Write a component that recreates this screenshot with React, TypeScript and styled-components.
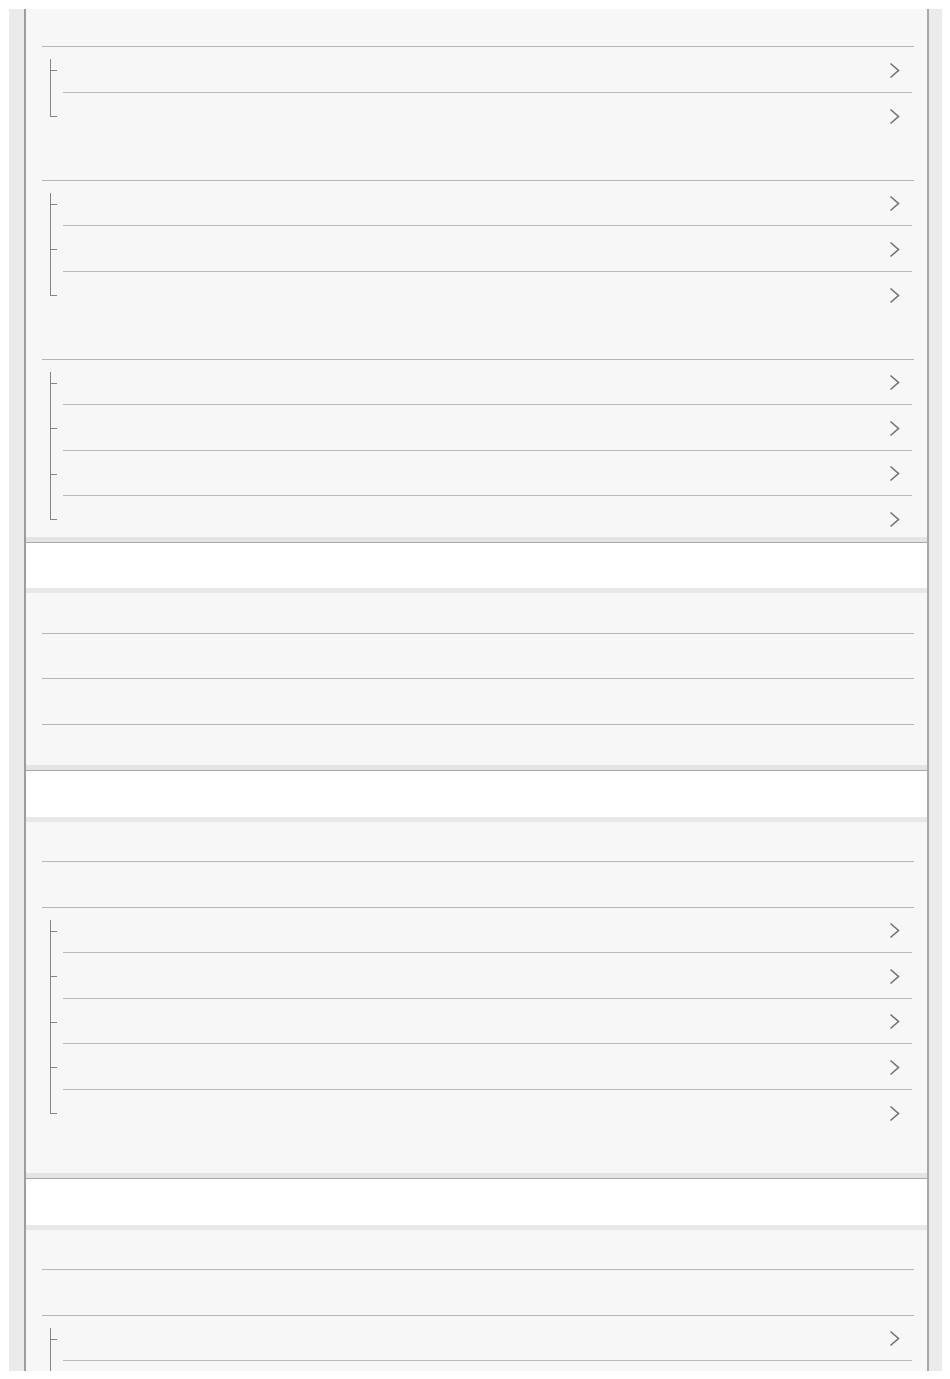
import React from "react";
import styled, { createGlobalStyle } from "styled-components";

const GlobalStyle = createGlobalStyle`
  html, body {
    margin: 0;
    padding: 0;
    background: #ffffff;
    font-family: "Liberation Sans", Arial, sans-serif;
  }
`;

const Page = styled.div`
  box-sizing: border-box;
  margin: 9px 8px 8px 9px;
  height: 1362px;
  background: #ebebeb;
  padding: 0 13px 0 15px;
  overflow: hidden;
`;

const Column = styled.div`
  display: flex;
  flex-direction: column;
  border-left: 2px solid #9d9d9d;
  border-right: 2px solid #a8a8a8;
  min-height: 100%;
`;

const Panel = styled.section<{ $padBottom?: number }>`
  flex-shrink: 0;
  display: flex;
  flex-direction: column;
  background: #f7f7f7;
  padding: 0 13px ${(p) => p.$padBottom ?? 0}px 16px;
`;

const SectionBar = styled.div`
  position: relative;
  z-index: 1;
  flex-shrink: 0;
  box-sizing: border-box;
  height: 46.5px;
  background: #ffffff;
  border-top: 1px solid #a9a9a9;
  box-shadow: 0 -5px 0 #e4e4e4, 0 5px 0 #e8e8e8;
`;

const LineRow = styled.div<{ $h?: number; $last?: boolean }>`
  box-sizing: border-box;
  height: ${(p) => p.$h ?? 45.5}px;
  border-bottom: ${(p) => (p.$last ? "none" : "1.5px solid #b6b6b6")};
`;

const Tree = styled.div`
  display: flex;
  flex-direction: column;
  margin-right: 2px;
`;

const TreeRow = styled.div`
  display: grid;
  grid-template-columns: 21px 1fr;
  height: 45.5px;
`;

const Connector = styled.div`
  display: flex;
  flex-direction: column;
`;

const ConnectorUpper = styled.div<{ $first?: boolean }>`
  box-sizing: border-box;
  margin: ${(p) => (p.$first ? 12 : 0)}px 0 0 8px;
  height: ${(p) => (p.$first ? 12 : 24)}px;
  width: 7px;
  border-left: 1.5px solid #868686;
  border-bottom: 1.5px solid #868686;
  flex-shrink: 0;
`;

const ConnectorLower = styled.div<{ $last?: boolean }>`
  flex: 1;
  margin-left: 8px;
  border-left: ${(p) => (p.$last ? "none" : "1.5px solid #868686")};
`;

const RowBody = styled.div<{ $last?: boolean }>`
  box-sizing: border-box;
  display: flex;
  align-items: center;
  justify-content: flex-end;
  padding: 2px 12px 0 0;
  border-bottom: ${(p) => (p.$last ? "none" : "1.5px solid #bababa")};
`;

const Chevron = () => (
  <svg width="11" height="17" viewBox="0 0 11 17" aria-hidden="true">
    <polyline
      points="1.5,1.5 9.5,8.5 1.5,15.5"
      fill="none"
      stroke="#727272"
      strokeWidth="1.6"
    />
  </svg>
);

const TreeList = ({ count }: { count: number }) => (
  <Tree>
    {Array.from({ length: count }).map((_, i) => {
      const first = i === 0;
      const last = i === count - 1;
      return (
        <TreeRow key={i}>
          <Connector>
            <ConnectorUpper $first={first} />
            <ConnectorLower $last={last} />
          </Connector>
          <RowBody $last={last}>
            <Chevron />
          </RowBody>
        </TreeRow>
      );
    })}
  </Tree>
);

export default function App() {
  return (
    <>
      <GlobalStyle />
      <Page>
        <Column>
          <Panel>
            <LineRow $h={38} />
            <TreeList count={2} />
            <LineRow $h={42.5} />
            <TreeList count={3} />
            <LineRow $h={42.5} />
            <TreeList count={4} />
          </Panel>
          <SectionBar />
          <Panel>
            <LineRow />
            <LineRow />
            <LineRow />
            <LineRow $last />
          </Panel>
          <SectionBar />
          <Panel $padBottom={43}>
            <LineRow />
            <LineRow />
            <TreeList count={5} />
          </Panel>
          <SectionBar />
          <Panel>
            <LineRow />
            <LineRow />
            <TreeList count={3} />
          </Panel>
        </Column>
      </Page>
    </>
  );
}
